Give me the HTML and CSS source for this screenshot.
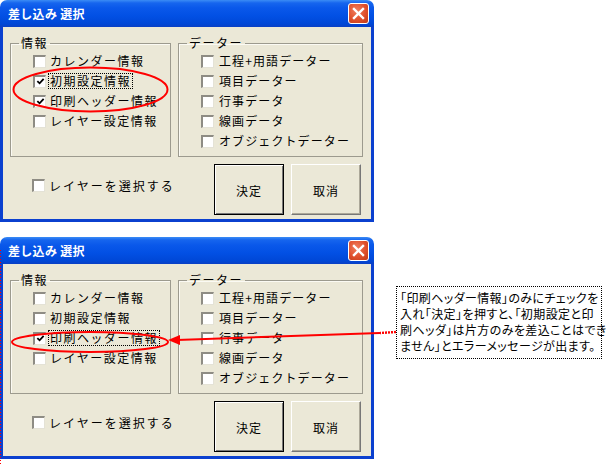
FILE: index.html
```html
<!DOCTYPE html>
<html lang="ja">
<head>
<meta charset="utf-8">
<title>差し込み 選択</title>
<link rel="stylesheet" href="styles.css">
</head>
<body>
<div class="page">

  <div class="dialog">
    <div class="titlebar">
      <span class="title">差し込み 選択</span>
      <span class="close"><svg viewBox="0 0 19 19" width="19" height="19"><path d="M5 5 L14 14 M14 5 L5 14" stroke="#fff" stroke-width="2.4" stroke-linecap="square"/></svg></span>
    </div>
    <div class="body">
      <div class="groups">
        <fieldset class="group g1">
          <legend>情報</legend>
          <div class="row"><span class="cb"></span><span class="lbl">カレンダー情報</span></div>
          <div class="row"><span class="cb"><svg viewBox="0 0 10 10"><path d="M1.5 4.5 L4 7 L8.5 2" fill="none" stroke="#000" stroke-width="2"/></svg></span><span class="lbl focus">初期設定情報</span></div>
          <div class="row"><span class="cb"><svg viewBox="0 0 10 10"><path d="M1.5 4.5 L4 7 L8.5 2" fill="none" stroke="#000" stroke-width="2"/></svg></span><span class="lbl">印刷ヘッダー情報</span></div>
          <div class="row"><span class="cb"></span><span class="lbl">レイヤー設定情報</span></div>
        </fieldset>
        <fieldset class="group g2">
          <legend>データー</legend>
          <div class="row"><span class="cb"></span><span class="lbl">工程+用語データー</span></div>
          <div class="row"><span class="cb"></span><span class="lbl">項目データー</span></div>
          <div class="row"><span class="cb"></span><span class="lbl">行事データ</span></div>
          <div class="row"><span class="cb"></span><span class="lbl">線画データ</span></div>
          <div class="row"><span class="cb"></span><span class="lbl">オブジェクトデーター</span></div>
        </fieldset>
      </div>
      <div class="bottom">
        <div class="row layer"><span class="cb"></span><span class="lbl">レイヤーを選択する</span></div>
        <div class="buttons">
          <span class="btn default">決定</span>
          <span class="btn">取消</span>
        </div>
      </div>
    </div>
  </div>

  <div class="dialog second">
    <div class="titlebar">
      <span class="title">差し込み 選択</span>
      <span class="close"><svg viewBox="0 0 19 19" width="19" height="19"><path d="M5 5 L14 14 M14 5 L5 14" stroke="#fff" stroke-width="2.4" stroke-linecap="square"/></svg></span>
    </div>
    <div class="body">
      <div class="groups">
        <fieldset class="group g1">
          <legend>情報</legend>
          <div class="row"><span class="cb"></span><span class="lbl">カレンダー情報</span></div>
          <div class="row"><span class="cb"></span><span class="lbl">初期設定情報</span></div>
          <div class="row"><span class="cb"><svg viewBox="0 0 10 10"><path d="M1.5 4.5 L4 7 L8.5 2" fill="none" stroke="#000" stroke-width="2"/></svg></span><span class="lbl focus">印刷ヘッダー情報</span></div>
          <div class="row"><span class="cb"></span><span class="lbl">レイヤー設定情報</span></div>
        </fieldset>
        <fieldset class="group g2">
          <legend>データー</legend>
          <div class="row"><span class="cb"></span><span class="lbl">工程+用語データー</span></div>
          <div class="row"><span class="cb"></span><span class="lbl">項目データー</span></div>
          <div class="row"><span class="cb"></span><span class="lbl">行事データ</span></div>
          <div class="row"><span class="cb"></span><span class="lbl">線画データ</span></div>
          <div class="row"><span class="cb"></span><span class="lbl">オブジェクトデーター</span></div>
        </fieldset>
      </div>
      <div class="bottom">
        <div class="row layer"><span class="cb"></span><span class="lbl">レイヤーを選択する</span></div>
        <div class="buttons">
          <span class="btn default">決定</span>
          <span class="btn">取消</span>
        </div>
      </div>
    </div>
  </div>

  <div class="callout">「印刷ヘッダー情報」のみにチェックを<br>入れ「決定」を押すと、「初期設定と印<br>刷ヘッダ」は片方のみを差込ことはでき<br>ません」とエラーメッセージが出ます。</div>

  <svg class="marks" width="606" height="464" viewBox="0 0 606 464">
    <ellipse cx="90.5" cy="89.5" rx="77" ry="22" fill="none" stroke="#f00" stroke-width="2"/>
    <ellipse cx="90" cy="342" rx="78" ry="10" fill="none" stroke="#f00" stroke-width="2"/>
    <line x1="396" y1="332" x2="380" y2="333" stroke="#f00" stroke-width="2.5" stroke-dasharray="2 1"/>
    <line x1="380" y1="333" x2="177" y2="340" stroke="#f00" stroke-width="2"/>
    <polygon points="168,340 180,335 180,345" fill="#f00"/>
    <line x1="0.5" y1="250" x2="0.5" y2="464" stroke="#f00" stroke-width="1" stroke-dasharray="1 2"/>
  </svg>
</div>
</body>
</html>
```
FILE: styles.css
```css
html, body {
  margin: 0;
  padding: 0;
  background: #fff;
}

.page {
  position: relative;
  width: 606px;
  height: 464px;
  overflow: hidden;
  font-family: "Noto Sans CJK JP", "Noto Sans", sans-serif;
  font-size: 12px;
  color: #000;
}

.dialog {
  width: 374px;
  box-sizing: border-box;
}

.dialog.second {
  margin-top: 15px;
}

.titlebar {
  height: 27px;
  box-sizing: border-box;
  display: flex;
  align-items: center;
  justify-content: space-between;
  padding: 0 5px 0 8px;
  border-radius: 7px 7px 0 0;
  background: linear-gradient(#3b8cf5 0, #1665ee 3px, #0a58ea 8px, #0250e4 16px, #0047d6 24px, #0a3fc4 27px);
}

.title {
  color: #fff;
  font-weight: bold;
  font-size: 12px;
  line-height: 14px;
  letter-spacing: 0.3px;
}

.close {
  width: 21px;
  height: 21px;
  box-sizing: border-box;
  border: 1px solid #fff;
  border-radius: 3px;
  background: radial-gradient(circle at 40% 35%, #f08060 0, #e0502c 55%, #c03a18 100%);
  display: flex;
  align-items: center;
  justify-content: center;
}

.body {
  background: #ebe8d7;
  border: 3px solid #0b40cf;
  border-top: 0;
  padding: 9px 8px 4px 7px;
}

.groups {
  display: flex;
  gap: 7px;
}

.group {
  margin: 0;
  padding: 1px 0 5px 8px;
  border: 1px solid #9c9a8e;
  box-shadow: inset 1px 1px 0 #fbfaf3;
  min-inline-size: 0;
}

.g1 { width: 161px; box-sizing: border-box; }
.g2 { width: 185px; box-sizing: border-box; }

legend {
  padding: 0 2px;
  line-height: 14px;
  letter-spacing: 1.5px;
}

.row {
  display: flex;
  align-items: center;
  height: 20px;
  padding-left: 14px;
}

.cb {
  width: 13px;
  height: 13px;
  box-sizing: border-box;
  flex: none;
  background: #fff;
  border-top: 2px solid #8e8c84;
  border-left: 2px solid #8e8c84;
  border-right: 1px solid #e4e2d6;
  border-bottom: 1px solid #e4e2d6;
  display: flex;
  align-items: center;
  justify-content: center;
}

.cb svg {
  width: 9px;
  height: 9px;
  display: block;
}

.lbl {
  margin-left: 4px;
  letter-spacing: 1.5px;
  line-height: 14px;
  white-space: nowrap;
}

.g2 .lbl {
  margin-left: 5px;
  letter-spacing: 1.1px;
}

.layer .lbl {
  letter-spacing: 2px;
}

.focus {
  outline: 1px dotted #000;
  outline-offset: 0;
  padding: 0 1px;
  margin-left: 3px;
}

.bottom {
  display: flex;
  margin-top: 7px;
}

.layer {
  padding-left: 22px;
  margin-top: 15px;
  height: 13px;
}

.buttons {
  margin-left: auto;
  margin-right: 2px;
  display: flex;
  gap: 7px;
}

.btn {
  width: 70px;
  height: 51px;
  box-sizing: border-box;
  display: flex;
  align-items: center;
  justify-content: center;
  background: #ebe8d7;
  border-top: 1px solid #fff;
  border-left: 1px solid #fff;
  border-right: 1px solid #777;
  border-bottom: 1px solid #777;
  box-shadow: inset -1px -1px 0 #aca899;
  letter-spacing: 1px;
  padding-top: 1px;
}

.btn.default {
  border: 1px solid #000;
  box-shadow: inset 1px 1px 0 #fff, inset -1px -1px 0 #777;
}

.callout {
  position: absolute;
  left: 396px;
  top: 286px;
  width: 206px;
  box-sizing: border-box;
  border: 1px dotted #000;
  background: #fff;
  padding: 3px 1px 4px 3px;
  line-height: 16px;
  font-size: 12px;
  font-feature-settings: "palt";
  letter-spacing: 0.4px;
  white-space: nowrap;
}

.marks {
  position: absolute;
  left: 0;
  top: 0;
  pointer-events: none;
}
```
